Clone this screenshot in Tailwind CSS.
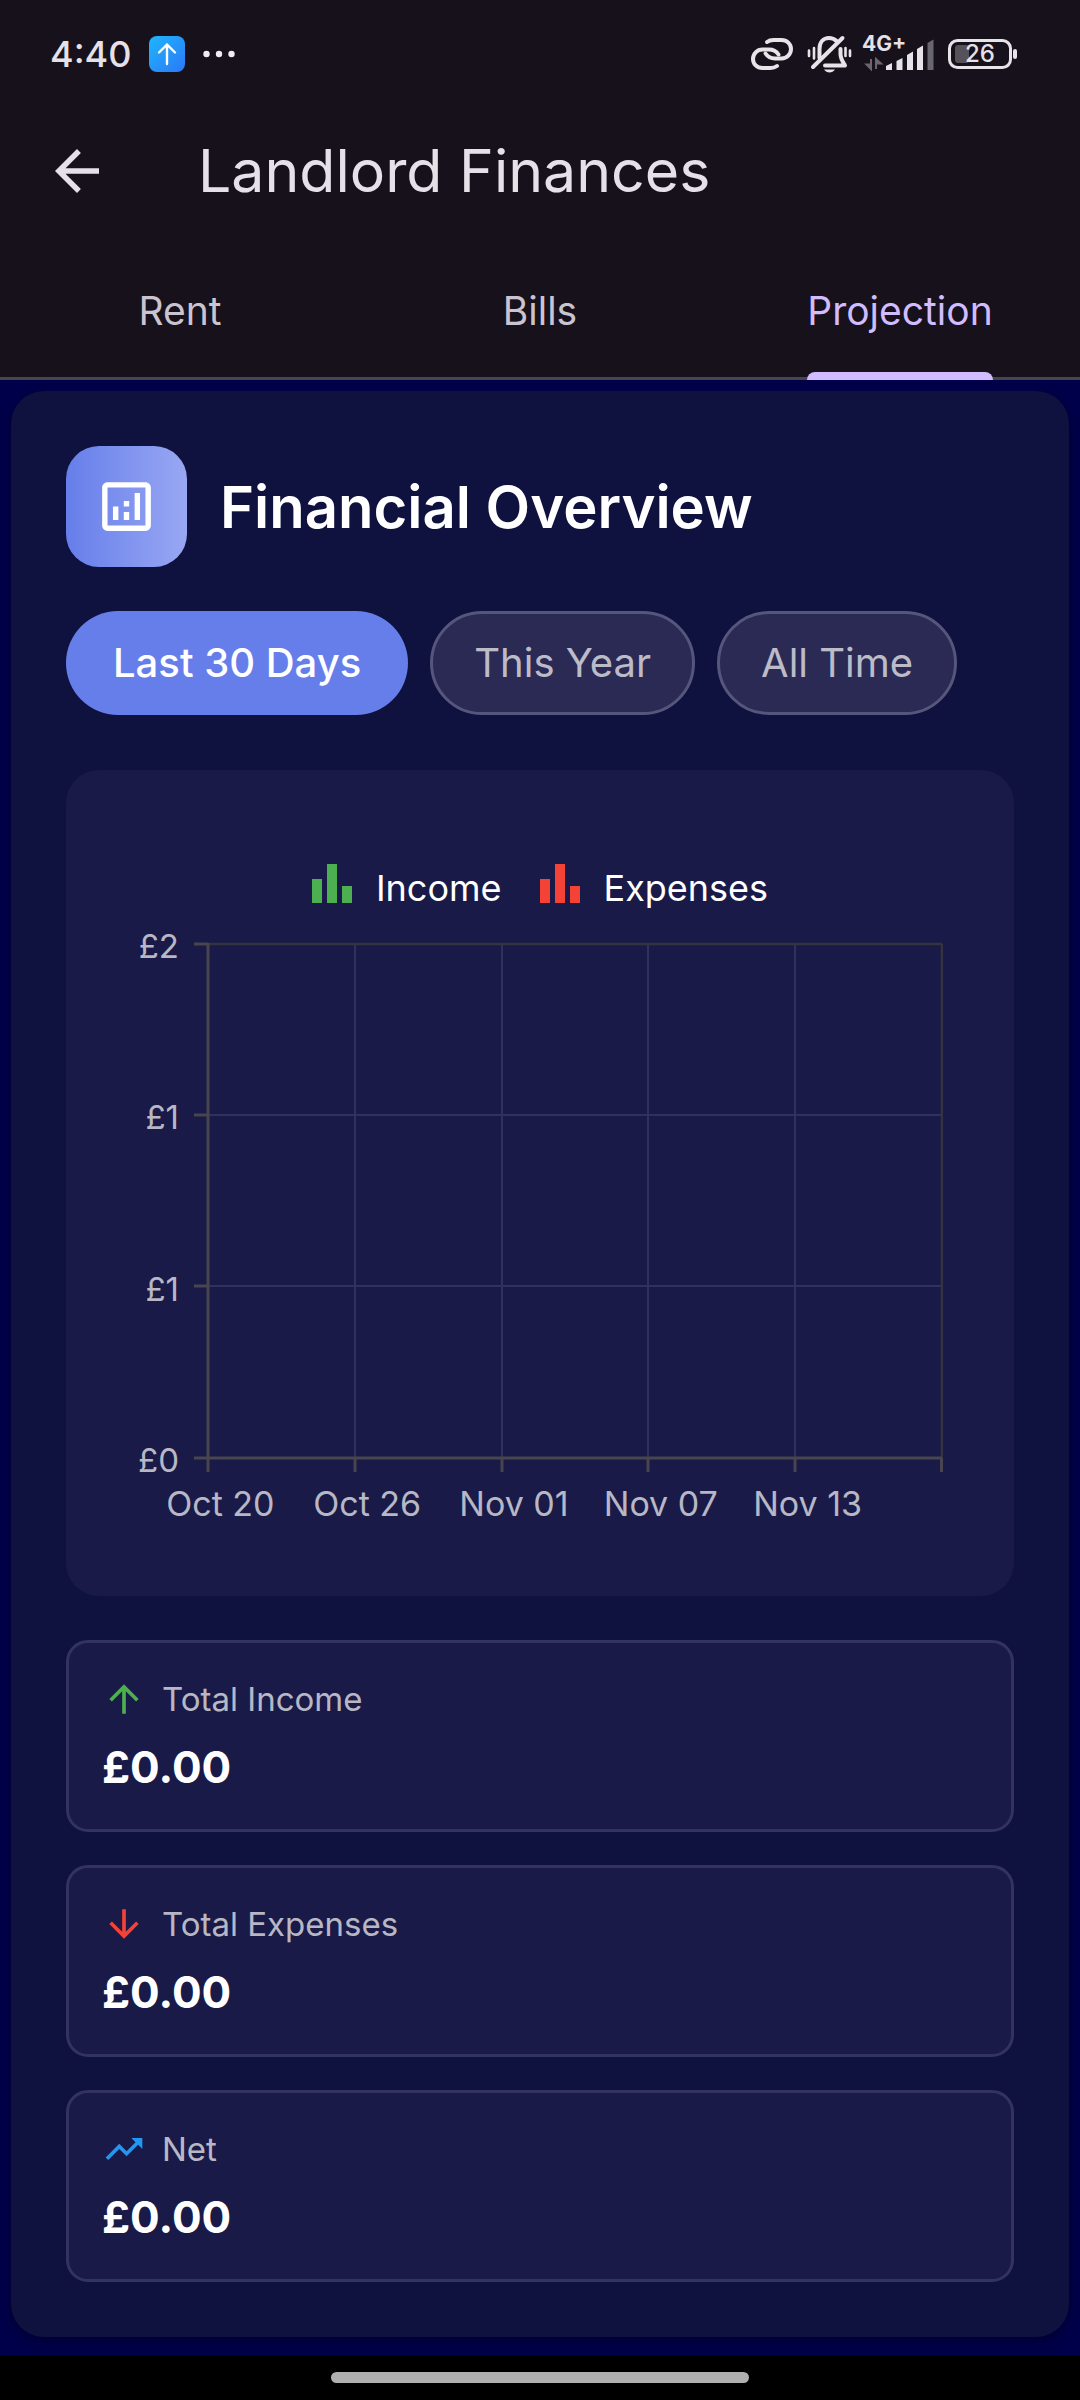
<!DOCTYPE html>
<html lang="en">
    <head>
        <meta charset="UTF-8" />
        <meta name="viewport" content="width=device-width, initial-scale=1.0" />
        <script src="https://cdn.jsdelivr.net/npm/@tailwindcss/browser@4"></script>
        <title>Landlord Finances</title>
    </head>

    <body class="bg-black font-['Inter','Roboto',sans-serif] text-white">
        <div id="contentWrapper" class="flex min-h-screen flex-col">
            <header class="bg-[#16111a] text-[#e6e0e9]">
                <!-- status bar -->
                <div class="flex h-[94px] items-center justify-between pt-[14px] pr-[62px] pl-[50px]">
                    <div class="flex items-center gap-[18px]">
                        <span class="text-[36px] leading-10 font-medium">4:40</span>
                        <svg class="size-9" viewBox="0 0 36 36" fill="none">
                            <defs>
                                <linearGradient id="uploadFill" x1="0" y1="0" x2="1" y2="1">
                                    <stop offset="0" stop-color="#1fb6ff" />
                                    <stop offset="1" stop-color="#2b78f6" />
                                </linearGradient>
                            </defs>
                            <rect width="36" height="36" rx="8" fill="url(#uploadFill)" />
                            <path d="M18 28V8.5M10 16.5l8-8 8 8" stroke="#fff" stroke-width="2.4" stroke-linecap="round" stroke-linejoin="round" />
                        </svg>
                        <svg class="h-2 w-8" viewBox="0 0 32 8" fill="#f0ecf2">
                            <circle cx="3.5" cy="4" r="3.2" />
                            <circle cx="16" cy="4" r="3.2" />
                            <circle cx="28.5" cy="4" r="3.2" />
                        </svg>
                    </div>
                    <div class="flex items-center">
                        <!-- link -->
                        <svg class="mr-[14px] h-9 w-[42px]" viewBox="0 0 42 36" fill="none" stroke="#e6e3e9" stroke-width="4" stroke-linecap="round">
                            <path d="M16 6C18 4.500 20 4 22.500 4H30.500C36 4 40 8 40 13S36 22.500 30.500 22.500H24C20 22.500 16.500 20.500 14.500 17.500" />
                            <path d="M26 30C24 31.500 22 32 19.500 32H11.500C6 32 2 28 2 23S6 13.500 11.500 13.500H18C22 13.500 25.500 15.500 27.500 18.500" />
                        </svg>
                        <!-- muted bell with vibration -->
                        <svg class="mr-2.5 h-10 w-[45px]" viewBox="0 0 45 40" fill="none" stroke="#e6e3e9" stroke-width="4" stroke-linecap="round" stroke-linejoin="round">
                            <path d="M12.500 24V15C12.500 8 16.500 4 22 4C25 4 27.500 5 29.500 7" />
                            <path d="M33.500 15V20C33.500 25 36 28 38 31.500H18" />
                            <path d="M35.500 4L6 33" />
                            <path d="M17 35.500C19.500 39.500 25.500 39.500 28 35.500Z" fill="#e6e3e9" stroke="none" />
                            <path d="M2 16.500V22M7 14V24.500M38.500 14V22M43 16.500V22" stroke-width="2.600" />
                        </svg>
                        <!-- mobile signal -->
                        <div class="relative mr-[14px] h-9 w-[72px]">
                            <span class="absolute top-0 left-0 text-[21px] leading-4 font-bold">4G+</span>
                            <svg class="h-9 w-[72px]" viewBox="0 0 72 36" fill="#e6e3e9">
                                <path d="M9 23V33L4.500 28.500H9M14 33V23L19 27.500H14" fill="#6a6670" stroke="#6a6670" stroke-width="2" />
                                <path d="M24 34V30L30 27V34Z" />
                                <path d="M34.500 34V25L40.500 22V34Z" />
                                <path d="M45 34V19L51 15.500V34Z" />
                                <path d="M55 34V13L61 9.500V34Z" />
                                <path d="M65.500 34V7L71.500 3.500V34Z" fill="#6a6670" />
                            </svg>
                        </div>
                        <!-- battery -->
                        <div class="relative flex h-[30px] w-[70px]">
                            <svg class="h-[30px] w-[70px]" viewBox="0 0 70 30" fill="none">
                                <rect x="1.500" y="1.500" width="61" height="27" rx="8" stroke="#e6e3e9" stroke-width="3" />
                                <rect x="7" y="6" width="14" height="18" rx="3" fill="#55525a" />
                                <rect x="65" y="10" width="4" height="10" rx="2" fill="#e6e3e9" />
                            </svg>
                            <span class="absolute inset-y-0 left-0 w-16 text-center text-[24px] leading-[30px] font-medium">26</span>
                        </div>
                    </div>
                </div>

                <!-- app bar -->
                <div class="flex h-[154px] items-center gap-[88px] pl-11">
                    <button type="button" aria-label="Back">
                        <svg class="size-[66px]" viewBox="0 0 24 24" fill="currentColor">
                            <path d="M20 11H7.830l5.590-5.590L12 4l-8 8 8 8 1.410-1.410L7.830 13H20v-2z" />
                        </svg>
                    </button>
                    <h1 class="text-[59px] leading-[66px]">Landlord Finances</h1>
                </div>

                <nav class="grid h-[132px] grid-cols-3 border-b-3 border-[#49454f] text-[39px] text-[#cac4d0]">
                    <button type="button" class="pb-0.5">Rent</button>
                    <button type="button" class="pb-0.5">Bills</button>
                    <button type="button" class="flex justify-center text-[#d0bcff]">
                        <span class="relative flex h-full items-center pb-0.5">
                            Projection
                            <span class="absolute inset-x-0 -bottom-[3px] h-2 rounded-t-lg bg-[#d0bcff]"></span>
                        </span>
                    </button>
                </nav>
            </header>

            <main class="flex-1 bg-[#00004a] px-[11px] pt-[11px] pb-[17px]">
                <section class="rounded-[33px] bg-[#0f113e] p-[55px] shadow-[0_4px_12px_rgba(0,0,0,0.35)]">
                    <div class="flex items-center gap-[33px]">
                        <div class="rounded-[33px] bg-linear-to-r from-[#667eea] to-[#99a7f3] p-7">
                            <svg class="size-[65px]" viewBox="0 0 24 24" fill="#fff">
                                <path d="M19 3H5c-1.100 0-2 .9-2 2v14c0 1.100.9 2 2 2h14c1.100 0 2-.9 2-2V5c0-1.100-.9-2-2-2zm0 16H5V5h14v14z" />
                                <path d="M7 12h2v5H7zM15 7h2v10h-2zM11 14h2v3h-2zM11 10h2v2h-2z" />
                            </svg>
                        </div>
                        <h2 class="text-[58px] leading-[66px] font-semibold">Financial Overview</h2>
                    </div>

                    <div class="mt-11 flex gap-[22px] text-[40px] text-white/70">
                        <button type="button" class="h-[104px] rounded-full bg-[#667eea] px-[47px] font-medium text-white">Last 30 Days</button>
                        <button type="button" class="h-[104px] rounded-full border-3 border-[#56567d] bg-[#2a2a54] px-[41px]">This Year</button>
                        <button type="button" class="h-[104px] rounded-full border-3 border-[#56567d] bg-[#2a2a54] px-[41px]">All Time</button>
                    </div>

                    <div id="chart" class="mt-[55px] rounded-[33px] bg-[#191a47] pt-[94px] pb-[70px]">
                        <div class="mb-3 flex h-12 items-center justify-center gap-[38px] text-[36px] leading-[44px]">
                            <div class="flex items-center gap-6">
                                <svg class="h-12 w-10" viewBox="0 0 40 48" fill="#4caf50">
                                    <path d="M0 15h10v24H0zM15 0h10v39H15zM30 22h10v17H30z" />
                                </svg>
                                Income
                            </div>
                            <div class="flex items-center gap-6">
                                <svg class="h-12 w-10" viewBox="0 0 40 48" fill="#f44336">
                                    <path d="M0 15h10v24H0zM15 0h10v39H15zM30 22h10v17H30z" />
                                </svg>
                                Expenses
                            </div>
                        </div>

                        <div class="flex gap-[15px] pr-[71px] text-[33px] leading-[44px] text-white/70">
                            <div class="flex h-[558px] w-[113px] flex-col justify-between text-right">
                                <span>£2</span>
                                <span>£1</span>
                                <span>£1</span>
                                <span>£0</span>
                            </div>
                            <svg class="mt-[18px] h-[530px] min-w-0 flex-1" viewBox="0 0 749 530" preserveAspectRatio="none" fill="none">
                                <path d="M161 2V516M308 2V516M454 2V516M601 2V516M14 173H748M14 344H748" stroke="#31325b" stroke-width="2" />
                                <path d="M14 2H748M748 2V516" stroke="#34343f" stroke-width="2.500" />
                                <path d="M0 2H14M0 173H14M0 344H14M0 516H748M14 1V530M161 516V530M308 516V530M454 516V530M601 516V530M747.500 516V530" stroke="#49454f" stroke-width="3" />
                            </svg>
                        </div>
                        <div class="grid grid-cols-5 pr-[133px] pl-[81px] text-center text-[34px] leading-[44px] whitespace-nowrap text-white/70">
                            <span>Oct 20</span>
                            <span>Oct 26</span>
                            <span>Nov 01</span>
                            <span>Nov 07</span>
                            <span>Nov 13</span>
                        </div>
                    </div>

                    <div class="mt-11 flex flex-col gap-[33px]">
                        <div class="rounded-[22px] border-3 border-[#32335e] bg-[#191a47] p-[33px]">
                            <div class="flex items-center gap-4 text-[33px] leading-[46px] text-white/70">
                                <svg class="size-11" viewBox="0 0 24 24" fill="#4caf50">
                                    <path d="M4 12l1.410 1.410L11 7.830V20h2V7.830l5.580 5.590L20 12l-8-8-8 8z" />
                                </svg>
                                Total Income
                            </div>
                            <p class="mt-4 text-[44px] leading-[58px] font-bold">£0.00</p>
                        </div>
                        <div class="rounded-[22px] border-3 border-[#32335e] bg-[#191a47] p-[33px]">
                            <div class="flex items-center gap-4 text-[33px] leading-[46px] text-white/70">
                                <svg class="size-11" viewBox="0 0 24 24" fill="#f44336">
                                    <path d="M20 12l-1.410-1.410L13 16.170V4h-2v12.170l-5.580-5.590L4 12l8 8 8-8z" />
                                </svg>
                                Total Expenses
                            </div>
                            <p class="mt-4 text-[44px] leading-[58px] font-bold">£0.00</p>
                        </div>
                        <div class="rounded-[22px] border-3 border-[#32335e] bg-[#191a47] p-[33px]">
                            <div class="flex items-center gap-4 text-[33px] leading-[46px] text-white/70">
                                <svg class="size-11" viewBox="0 0 24 24" fill="#2196f3">
                                    <path d="M16 6l2.290 2.290-4.880 4.880-4-4L2 16.590 3.410 18l6-6 4 4 6.300-6.290L22 12V6z" />
                                </svg>
                                Net
                            </div>
                            <p class="mt-4 text-[44px] leading-[58px] font-bold">£0.00</p>
                        </div>
                    </div>
                </section>
            </main>

            <footer class="flex h-[45px] items-center justify-center bg-black">
                <div class="h-[11px] w-[418px] rounded-full bg-[#b0b0b0]"></div>
            </footer>
        </div>
    </body>
</html>
